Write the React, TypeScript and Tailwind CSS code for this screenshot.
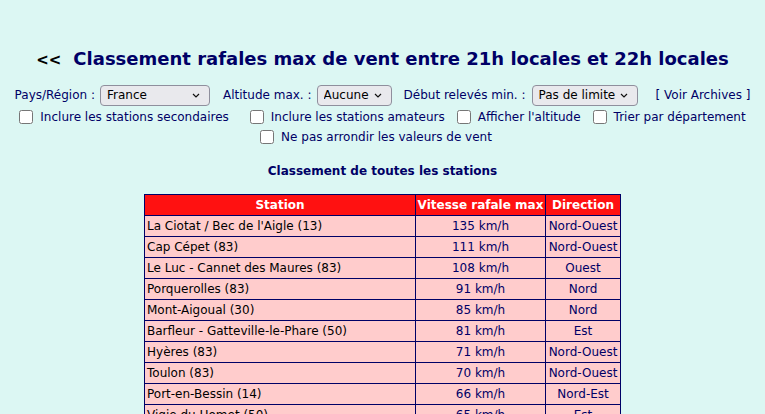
import React from "react";

const rows: [string, string, string][] = [
  ["La Ciotat / Bec de l'Aigle (13)", "135 km/h", "Nord-Ouest"],
  ["Cap Cépet (83)", "111 km/h", "Nord-Ouest"],
  ["Le Luc - Cannet des Maures (83)", "108 km/h", "Ouest"],
  ["Porquerolles (83)", "91 km/h", "Nord"],
  ["Mont-Aigoual (30)", "85 km/h", "Nord"],
  ["Barfleur - Gatteville-le-Phare (50)", "81 km/h", "Est"],
  ["Hyères (83)", "71 km/h", "Nord-Ouest"],
  ["Toulon (83)", "70 km/h", "Nord-Ouest"],
  ["Port-en-Bessin (14)", "66 km/h", "Nord-Est"],
  ["Vigie du Homet (50)", "65 km/h", "Est"],
  ["Cherbourg - Maupertus (50)", "63 km/h", "Est"],
];

function Sel({ value, w }: { value: string; w: string }) {
  return (
    <div className={`relative ${w} h-[21px]`}>
      <select
        defaultValue={value}
        className="appearance-none w-full h-full bg-[#e9e9ed] border border-[#8f8f9d] rounded-[4px] text-black text-[12px] pl-[6px] font-['DejaVu_Sans',sans-serif]"
      >
        <option>{value}</option>
      </select>
      <svg
        className="absolute right-[10px] top-[8px] pointer-events-none"
        width="8"
        height="5"
        viewBox="0 0 8 5"
      >
        <path d="M1 1 L4 4 L7 1" fill="none" stroke="#111" strokeWidth="1.2" />
      </svg>
    </div>
  );
}

function Cb({ label, className = "" }: { label: string; className?: string }) {
  return (
    <label className={`flex items-center gap-[7px] whitespace-nowrap ${className}`}>
      <input type="checkbox" className="w-[14px] h-[14px] m-0" />
      <span>{label}</span>
    </label>
  );
}

export default function App() {
  return (
    <div className="min-h-screen bg-[#dcf7f3] font-['DejaVu_Sans',sans-serif] text-[#000066] pt-[46px]">
      <div className="flex justify-center items-baseline">
        <span className="text-black font-bold text-[15px] mr-[12px]">&lt;&lt;</span>
        <h1 className="font-bold text-[18px] leading-[26px]">
          Classement rafales max de vent entre 21h locales et 22h locales
        </h1>
      </div>
      <div className="flex justify-center items-center text-[12px] mt-[12px] h-[22px] whitespace-nowrap">
        <span className="mr-[5px]">Pays/Région :</span>
        <Sel value="France" w="w-[110px]" />
        <span className="ml-[13px] mr-[5px]">Altitude max. :</span>
        <Sel value="Aucune" w="w-[75px]" />
        <span className="ml-[12px] mr-[6px]">Début relevés min. :</span>
        <Sel value="Pas de limite" w="w-[106px]" />
        <span className="ml-[18px]">[ Voir Archives ]</span>
      </div>
      <div className="flex justify-center items-center text-[12px] h-[20px] mt-[1px]">
        <Cb label="Inclure les stations secondaires" />
        <Cb label="Inclure les stations amateurs" className="ml-[21px]" />
        <Cb label="Afficher l'altitude" className="ml-[12px]" />
        <Cb label="Trier par département" className="ml-[12px]" />
      </div>
      <div className="flex justify-center items-center text-[12px] h-[20px]">
        <Cb label="Ne pas arrondir les valeurs de vent" className="mr-[13px]" />
      </div>
      <div className="text-center font-bold text-[12px] mt-[16px] leading-[16px]">
        Classement de toutes les stations
      </div>
      <table className="mx-auto mt-[15px] border-collapse border border-[#808080] text-[12px]">
        <thead>
          <tr className="bg-[#ff1111] text-white">
            <th className="w-[271px] h-[21px] border border-[#000066] font-bold whitespace-nowrap">Station</th>
            <th className="w-[130px] border border-[#000066] font-bold whitespace-nowrap">Vitesse rafale max</th>
            <th className="w-[75px] border border-[#000066] font-bold whitespace-nowrap">Direction</th>
          </tr>
        </thead>
        <tbody>
          {rows.map((r, i) => (
            <tr key={i} className="bg-[#ffcccc]">
              <td className="h-[21px] border border-[#000066] text-black pl-[2px] whitespace-nowrap">{r[0]}</td>
              <td className="border border-[#000066] text-center whitespace-nowrap">{r[1]}</td>
              <td className="border border-[#000066] text-center whitespace-nowrap">{r[2]}</td>
            </tr>
          ))}
        </tbody>
      </table>
    </div>
  );
}
